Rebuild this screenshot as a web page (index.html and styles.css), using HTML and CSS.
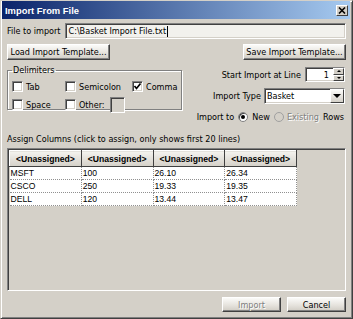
FILE: index.html
```html
<!DOCTYPE html>
<html lang="en">
<head>
    <meta charset="UTF-8">
    <title>Import From File</title>
    <link rel="stylesheet" href="styles.css">
</head>
<body>
<div class="window">
    <div class="titlebar">
        <span class="title">Import From File</span>
        <span class="close">
            <svg width="8" height="7" viewBox="0 0 8 7"><path d="M1 0.5 L7 6.5 M7 0.5 L1 6.5" stroke="#000" stroke-width="1.6"/></svg>
        </span>
    </div>
    <div class="content">
        <div class="file-row">
            <span>File to import</span>
            <div class="textbox file-box">C:\Basket Import File.txt<span class="caret"></span></div>
        </div>
        <div class="btn-row">
            <button class="btn wide">Load Import Template...</button>
            <button class="btn wide">Save Import Template...</button>
        </div>
        <div class="options">
            <fieldset class="group">
                <legend>Delimiters</legend>
                <div class="delims">
                    <label class="check"><span class="box"></span>Tab</label>
                    <label class="check"><span class="box"></span>Semicolon</label>
                    <label class="check"><span class="box"><svg width="9" height="9" viewBox="0 0 9 9"><path d="M1.5 4 L3.5 6.5 L7.5 1.5" stroke="#000" stroke-width="1.7" fill="none"/></svg></span>Comma</label>
                    <label class="check"><span class="box"></span>Space</label>
                    <label class="check">
                        <span class="box"></span>Other:
                        <span class="textbox other-box disabled-box"></span>
                    </label>
                </div>
            </fieldset>
            <div class="settings">
                <div class="setting line-setting">
                    <span>Start Import at Line</span>
                    <div class="textbox spinner">
                        <span class="spin-value">1</span>
                        <span class="spin-btns">
                            <span class="spin-btn"><span class="tri-up"></span></span>
                            <span class="spin-btn"><span class="tri-down"></span></span>
                        </span>
                    </div>
                </div>
                <div class="setting type-setting">
                    <span>Import Type</span>
                    <div class="textbox combo">
                        <span class="combo-value">Basket</span>
                        <span class="combo-btn"><span class="tri-down big"></span></span>
                    </div>
                </div>
                <div class="setting radio-row">
                    <span>Import to</span>
                    <span class="radio checked"></span><span>New</span>
                    <span class="radio off"></span><span class="muted">Existing</span>
                    <span>Rows</span>
                </div>
            </div>
        </div>
        <div class="assign-label">Assign Columns (click to assign, only shows first 20 lines)</div>
        <div class="listbox">
            <table class="grid">
                <tr>
                    <th>&lt;Unassigned&gt;</th>
                    <th>&lt;Unassigned&gt;</th>
                    <th>&lt;Unassigned&gt;</th>
                    <th>&lt;Unassigned&gt;</th>
                </tr>
                <tr><td>MSFT</td><td>100</td><td>26.10</td><td>26.34</td></tr>
                <tr><td>CSCO</td><td>250</td><td>19.33</td><td>19.35</td></tr>
                <tr><td>DELL</td><td>120</td><td>13.44</td><td>13.47</td></tr>
            </table>
        </div>
        <div class="footer">
            <button class="btn small muted">Import</button>
            <button class="btn small">Cancel</button>
        </div>
    </div>
</div>
</body>
</html>
```

FILE: styles.css
```css
* {
    margin: 0;
    padding: 0;
    box-sizing: border-box;
}

body {
    background: #d4d0c8;
    font-family: "DejaVu Sans Condensed", "Liberation Sans", sans-serif;
    font-size: 9px;
    color: #000;
}

.window {
    width: 353px;
    height: 319px;
    border: 1px solid;
    border-color: #d4d0c8 #404040 #404040 #d4d0c8;
    box-shadow: inset 1px 1px #fff, inset -1px -1px #808080;
    padding: 0 2px 2px 1px;
    display: flex;
    flex-direction: column;
}

.titlebar {
    height: 18px;
    background: linear-gradient(to right, #0a246a, #a6caf0);
    display: flex;
    align-items: center;
    justify-content: space-between;
    padding: 0 2px 0 3px;
}

.title {
    color: #fff;
    font-family: "Liberation Sans", sans-serif;
    font-weight: bold;
    font-size: 9.4px;
}

.close {
    width: 12px;
    height: 11px;
    background: #d4d0c8;
    border: 1px solid;
    border-color: #fff #404040 #404040 #fff;
    display: flex;
    align-items: center;
    justify-content: center;
}

.content {
    flex: 1;
    padding: 0 4px 0 5px;
    display: flex;
    flex-direction: column;
}

.file-row {
    margin-top: 4px;
    height: 16px;
    display: flex;
    align-items: center;
    gap: 4px;
}

.textbox {
    background: #fff;
    border: 1px solid;
    border-color: #808080 #fff #fff #808080;
    box-shadow: inset 1px 1px #404040, inset -1px -1px #d4d0c8;
    display: flex;
    align-items: center;
}

.file-box {
    flex: 1;
    height: 16px;
    padding-left: 3px;
    background: #f2f1ed;
}

.caret {
    width: 1px;
    height: 11px;
    background: #000;
    margin-left: 1px;
}

.btn-row {
    margin-top: 5px;
    display: flex;
    justify-content: space-between;
}

.btn {
    height: 16px;
    font: inherit;
    color: #000;
    background: linear-gradient(#fbfbf9, #e6e3dd 55%, #d0ccc4);
    border: 1px solid;
    border-color: #fff #404040 #404040 #fff;
    box-shadow: inset -1px -1px #808080;
}

.btn.wide {
    width: 103px;
}

.btn.small {
    width: 59px;
    height: 15px;
}

.muted {
    color: #808080;
    text-shadow: 1px 1px #fff;
}

.options {
    margin-top: 5px;
    display: flex;
    justify-content: space-between;
}

.group {
    width: 171px;
    height: 45px;
    border: 1px solid #808080;
    box-shadow: inset 1px 1px #fff, 1px 1px #fff;
    padding: 1px 4px 0 4px;
}

.group legend {
    padding: 0 1px;
    line-height: 11px;
}

.delims {
    display: grid;
    grid-template-columns: 53px 67px auto;
    grid-auto-rows: 15px;
    row-gap: 3px;
    margin-top: 2px;
}

.check {
    display: flex;
    align-items: center;
}

.box {
    width: 11px;
    height: 11px;
    margin-right: 3px;
    background: #fff;
    border: 1px solid;
    border-color: #808080 #fff #fff #808080;
    box-shadow: inset 1px 1px #404040, inset -1px -1px #d4d0c8;
    display: flex;
    align-items: center;
    justify-content: center;
}

.other-box {
    width: 15px;
    height: 16px;
    margin-left: 5px;
}

.disabled-box {
    background: #d4d0c8;
}

.settings {
    display: flex;
    flex-direction: column;
    align-items: flex-end;
    padding-top: 2px;
    padding-right: 1px;
}

.setting {
    display: flex;
    align-items: center;
}

.line-setting {
    height: 15px;
    gap: 4px;
}

.spinner {
    width: 40px;
    height: 15px;
    justify-content: flex-end;
}

.spin-value {
    padding-right: 4px;
}

.spin-btns {
    width: 11px;
    height: 13px;
    display: flex;
    flex-direction: column;
}

.spin-btn {
    flex: 1;
    background: #d4d0c8;
    border: 1px solid;
    border-color: #fff #404040 #404040 #fff;
    display: flex;
    align-items: center;
    justify-content: center;
}

.tri-up {
    border-left: 2px solid transparent;
    border-right: 2px solid transparent;
    border-bottom: 2px solid #000;
}

.tri-down {
    border-left: 2px solid transparent;
    border-right: 2px solid transparent;
    border-top: 2px solid #000;
}

.tri-down.big {
    border-left-width: 4px;
    border-right-width: 4px;
    border-top-width: 4px;
}

.type-setting {
    margin-top: 6px;
    height: 16px;
    gap: 3px;
}

.combo {
    width: 81px;
    height: 16px;
    justify-content: space-between;
}

.combo-value {
    padding-left: 2px;
}

.combo-btn {
    width: 14px;
    height: 14px;
    background: linear-gradient(#fbfbf9, #d4d0c8);
    border: 1px solid;
    border-color: #fff #404040 #404040 #fff;
    display: flex;
    align-items: center;
    justify-content: center;
}

.radio-row {
    margin-top: 7px;
    height: 12px;
    padding-right: 1px;
}

.radio {
    width: 10px;
    height: 10px;
    border-radius: 50%;
    border: 1px solid #808080;
    box-shadow: inset 1px 1px #404040;
    background: #fff;
    margin: 0 4px 0 4px;
    display: flex;
    align-items: center;
    justify-content: center;
}

.radio.checked::after {
    content: "";
    width: 4px;
    height: 4px;
    border-radius: 50%;
    background: #000;
}

.radio.off {
    background: #d4d0c8;
    border-color: #a0a0a0;
    box-shadow: none;
    margin-left: 4px;
    margin-right: 3px;
}

.radio-row .muted {
    margin-right: 4px;
}

.assign-label {
    margin-top: 11px;
    height: 11px;
    line-height: 11px;
}

.listbox {
    margin-top: 3px;
    height: 143px;
    border: 1px solid;
    border-color: #808080 #fff #fff #808080;
    box-shadow: inset 1px 1px #404040, inset -1px -1px #d4d0c8;
    padding: 1px;
}

.grid {
    width: 288px;
    table-layout: fixed;
    border-collapse: collapse;
    font-family: "Liberation Sans", sans-serif;
    font-size: 8.6px;
}

.grid th {
    height: 16px;
    font-weight: bold;
    background: linear-gradient(#f4f3ef, #d4d0c8);
    border: 1px solid;
    border-color: #fff #404040 #404040 #fff;
    text-align: center;
}

.grid td {
    height: 13px;
    padding-left: 1px;
    background: #fff;
    border-right: 1px dotted #909090;
    border-bottom: 1px dotted #909090;
}

.footer {
    margin-top: 6px;
    display: flex;
    justify-content: flex-end;
    gap: 6px;
}
```
